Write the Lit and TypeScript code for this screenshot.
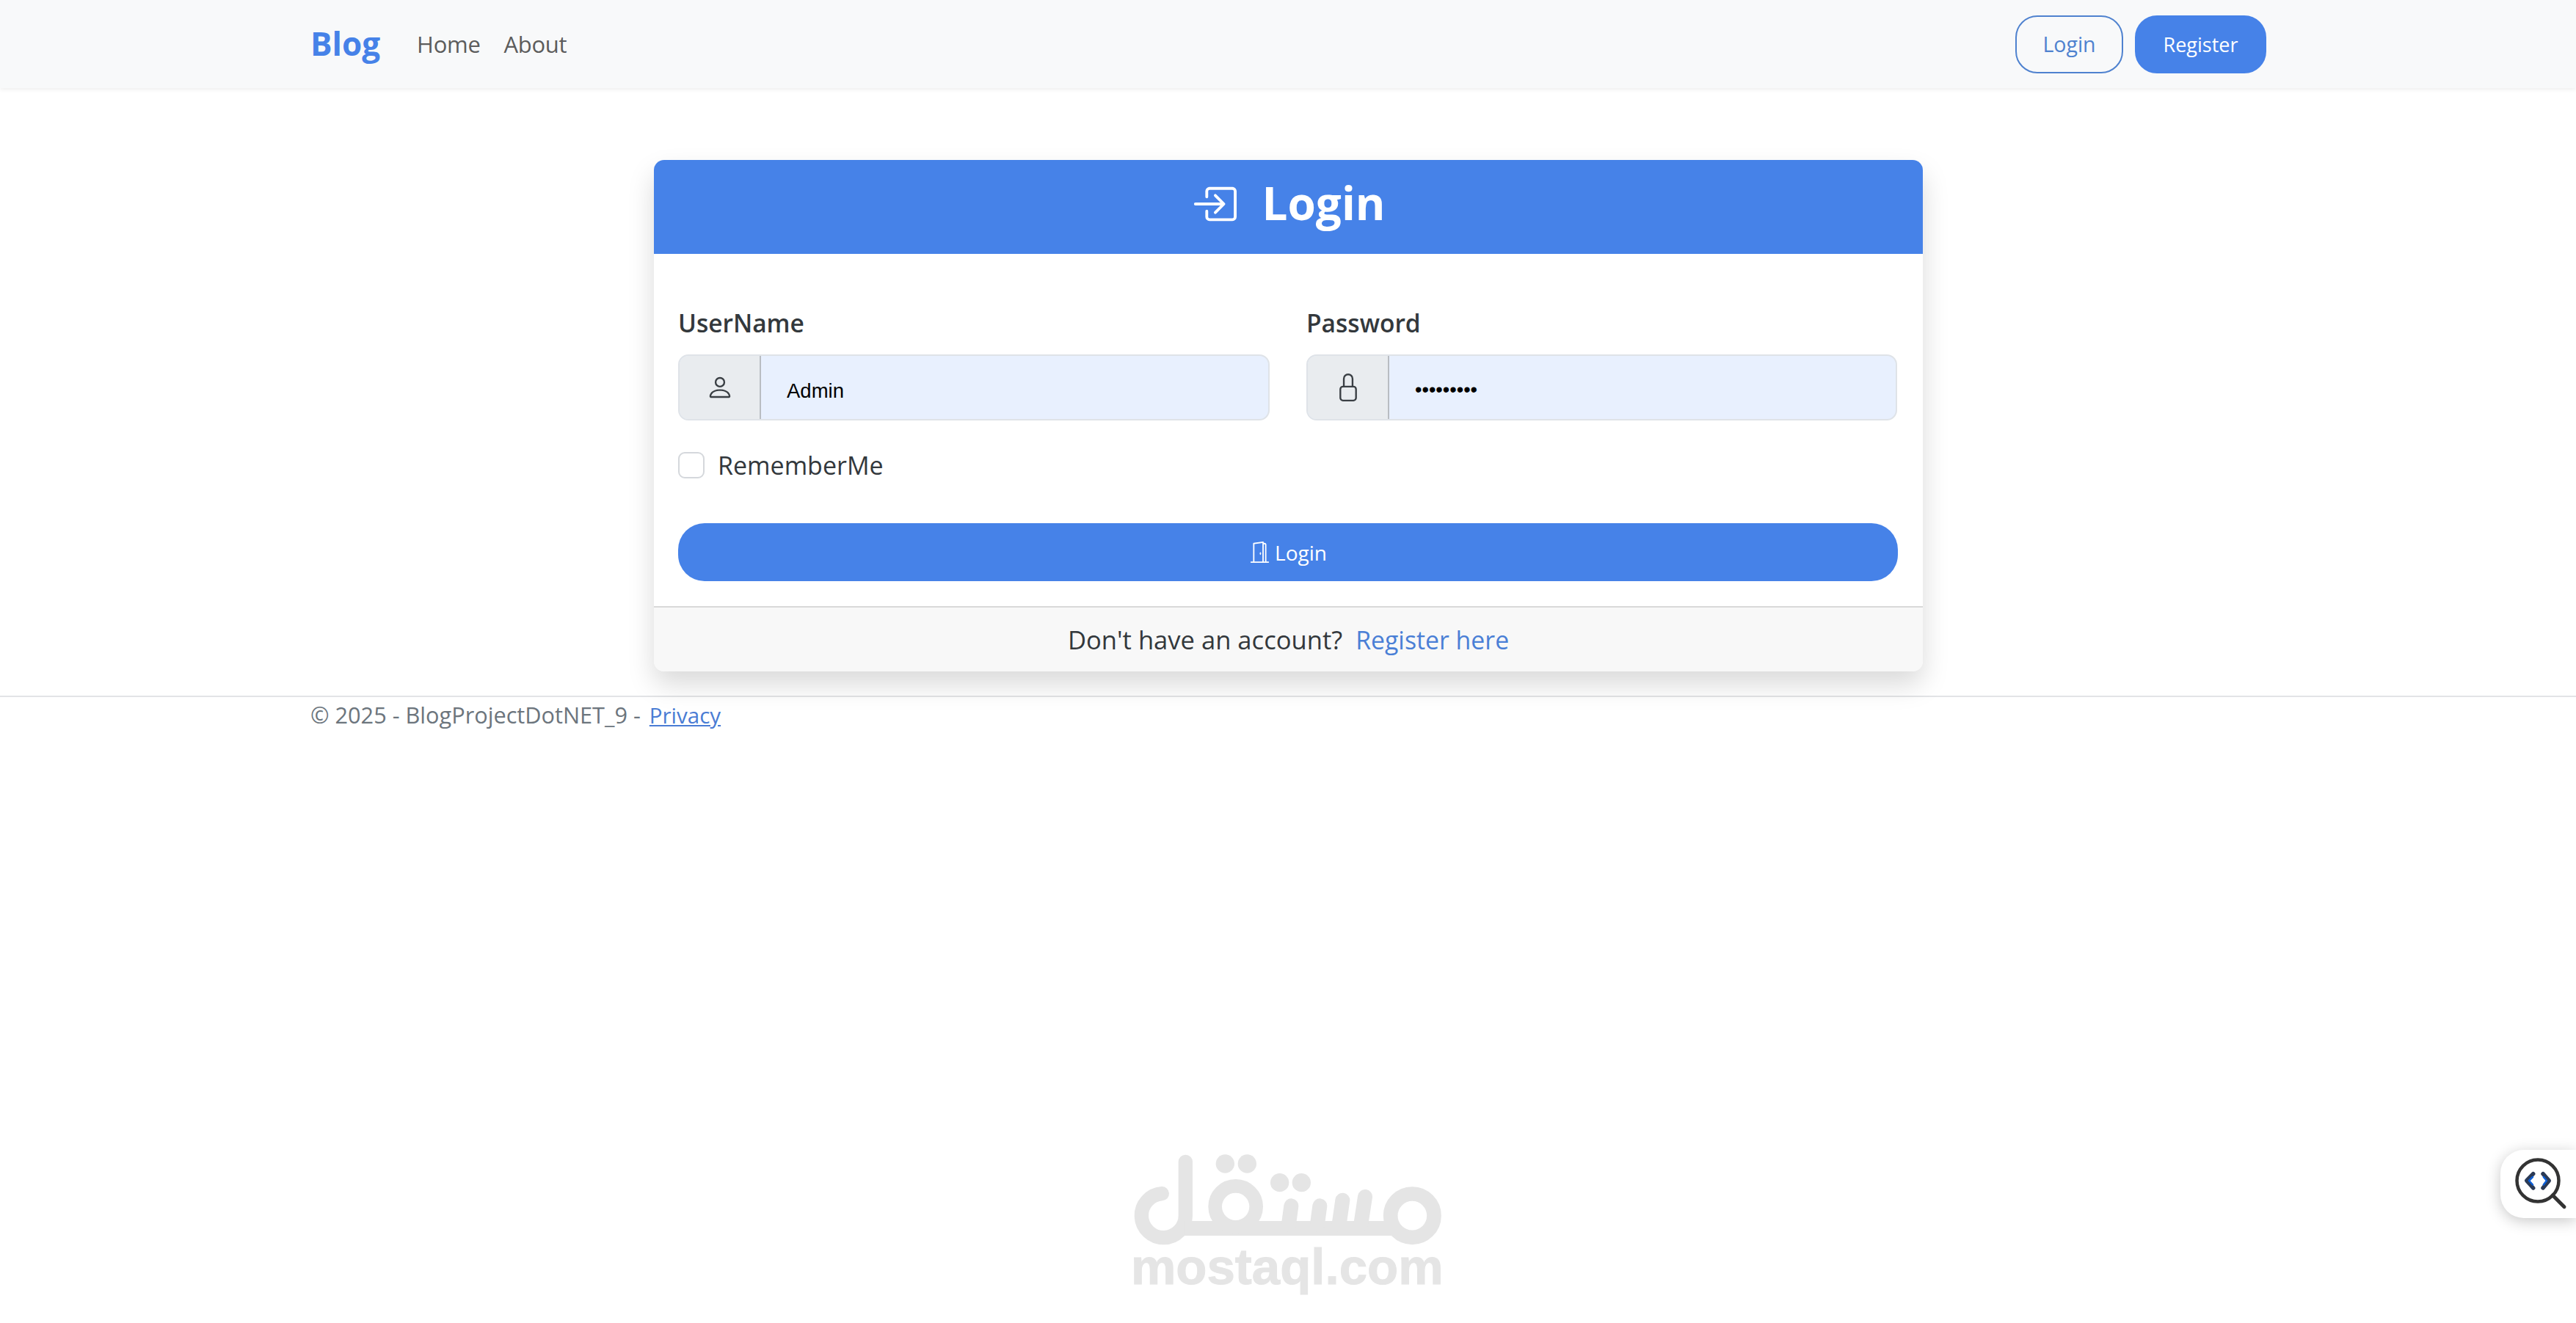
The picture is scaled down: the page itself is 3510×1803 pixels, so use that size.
import { LitElement, html, css } from "lit";
import { customElement } from "lit/decorators.js";

@customElement("app-root")
export class AppRoot extends LitElement {
  static styles = css`
    :host {
      display: block;
      position: relative;
      min-height: 100vh;
      overflow: hidden;
      background: #fff;
      font-family: "Open Sans", "Noto Sans", sans-serif;
      color: #33383c;
    }
    * { box-sizing: border-box; }
    a { text-decoration: none; }
    .nav {
      height: 120px;
      background: #f8f9fa;
      box-shadow: 0 2px 6px rgba(0, 0, 0, 0.07);
      display: flex;
      align-items: center;
      justify-content: space-between;
      padding: 0 422px 0 423px;
    }
    .left { display: flex; align-items: center; }
    .brand { font-size: 44px; font-weight: 700; color: #4682e8; margin-right: 50px; margin-top: -2px; }
    .navlink { font-size: 31px; color: #5c5c5c; margin-right: 32px; letter-spacing: -0.3px; }
    .right { display: flex; gap: 16px; }
    .btn {
      height: 79px;
      border-radius: 30px;
      display: flex;
      align-items: center;
      justify-content: center;
      font-size: 27px;
      border: 2px solid #4f82cf;
      color: #4f82cf;
    }
    .btn.login { width: 147px; font-size: 28.5px; }
    .btn.register { width: 179px; background: #4682e8; border-color: #4682e8; color: #fff; }
    main { display: flex; justify-content: center; padding: 98px 0 33px 1px; }
    .card {
      width: 1729px;
      border-radius: 14px;
      background: #fff;
      box-shadow: 0 18px 36px rgba(0, 0, 0, 0.15);
    }
    .head {
      height: 128px;
      background: #4682e8;
      border-radius: 14px 14px 0 0;
      color: #fff;
      display: flex;
      align-items: center;
      justify-content: center;
      gap: 34px;
      font-size: 62px;
      font-weight: 700;
    }
    .head svg { width: 62px; height: 62px; margin-top: -8px; }
    .head span { margin-top: -12px; }
    .body { padding: 0 34px 0 33px; }
    .grid { display: grid; grid-template-columns: 806px 805px; gap: 50px; padding-top: 70px; }
    label.field { display: block; font-size: 33.5px; font-weight: 600; line-height: 48px; margin-bottom: 19px; }
    .group {
      display: flex;
      height: 90px;
      border: 2px solid #dfe3e8;
      border-radius: 14px;
      background: #e8f0fe;
      overflow: hidden;
    }
    .addon {
      width: 111px;
      flex: none;
      background: #e9ecef;
      border-right: 2px solid #b9bdc2;
      display: flex;
      align-items: center;
      justify-content: center;
      color: #3a3f44;
    }
    .addon svg { width: 38px; height: 38px; }
    input.text {
      flex: 1;
      min-width: 0;
      border: 0;
      outline: 0;
      background: transparent;
      font-family: "Liberation Sans", Arial, sans-serif;
      font-size: 27.5px;
      color: #000;
      padding: 9px 0 0 35px;
    }
    input.pass { font-size: 27px; padding-top: 6px; }
    .check { display: flex; align-items: center; gap: 18px; margin-top: 43px; height: 36px; font-size: 34px; }
    .check input {
      appearance: none;
      width: 36px;
      height: 36px;
      margin: 0;
      border: 2px solid #d5d8dc;
      border-radius: 9px;
      background: #fff;
    }
    .submit {
      margin-top: 61px;
      height: 79px;
      border-radius: 36px;
      background: #4682e8;
      color: #fff;
      display: flex;
      align-items: center;
      justify-content: center;
      gap: 6px;
      font-size: 28px;
      margin-bottom: 34px;
    }
    .submit svg { width: 29px; height: 29px; }
    .foot {
      height: 89px;
      border-top: 2px solid #d9d9d9;
      background: #f8f8f8;
      border-radius: 0 0 14px 14px;
      display: flex;
      align-items: center;
      justify-content: center;
      gap: 18px;
      font-size: 34.6px;
    }
    .foot a { color: #4a7fd6; font-size: 33.8px; }
    footer {
      border-top: 2px solid #e3e4e6;
      padding: 2px 0 0 423px;
      font-size: 30.7px;
      color: #6c757d;
      line-height: 44px;
    }
    footer a { color: #4a7cd4; text-decoration: underline; font-size: 29.5px; margin-left: 4px; }
    .watermark {
      position: absolute;
      left: 1500px;
      top: 1540px;
      width: 500px;
      height: 263px;
    }
    .watermark svg { display: block; width: 500px; height: 263px; }
    .watermark div {
      position: absolute;
      left: 41px;
      top: 148px;
      font-family: "Liberation Sans", Arial, sans-serif;
      font-weight: 700;
      font-size: 69px;
      line-height: 78px;
      color: #e5e5e5;
      -webkit-text-stroke: 1px #e5e5e5;
      white-space: nowrap;
    }
    .widget {
      position: absolute;
      right: 0;
      top: 1567px;
      width: 103px;
      height: 93px;
      background: #fff;
      border-radius: 32px 0 0 32px;
      box-shadow: 0 4px 20px rgba(0, 0, 0, 0.22);
    }
    .widget svg { display: block; width: 103px; height: 93px; }
  `;

  render() {
    return html`
      <nav class="nav">
        <div class="left">
          <a class="brand">Blog</a>
          <a class="navlink">Home</a>
          <a class="navlink">About</a>
        </div>
        <div class="right">
          <a class="btn login">Login</a>
          <a class="btn register">Register</a>
        </div>
      </nav>
      <main>
        <section class="card">
          <div class="head">
            <svg viewBox="0 0 16 16" fill="currentColor">
              <path fill-rule="evenodd" d="M6 3.5a.5.5 0 0 1 .5-.5h8a.5.5 0 0 1 .5.5v9a.5.5 0 0 1-.5.5h-8a.5.5 0 0 1-.5-.5v-2a.5.5 0 0 0-1 0v2A1.5 1.5 0 0 0 6.5 14h8a1.5 1.5 0 0 0 1.5-1.5v-9A1.5 1.5 0 0 0 14.5 2h-8A1.5 1.5 0 0 0 5 3.5v2a.5.5 0 0 0 1 0z"/>
              <path fill-rule="evenodd" d="M11.854 8.354a.5.5 0 0 0 0-.708l-3-3a.5.5 0 1 0-.708.708L10.293 7.5H1.5a.5.5 0 0 0 0 1h8.793l-2.147 2.146a.5.5 0 0 0 .708.708z"/>
            </svg>
            <span>Login</span>
          </div>
          <div class="body">
            <div class="grid">
              <div>
                <label class="field">UserName</label>
                <div class="group">
                  <span class="addon">
                    <svg viewBox="0 0 16 16" fill="currentColor"><path d="M8 8a3 3 0 1 0 0-6 3 3 0 0 0 0 6m2-3a2 2 0 1 1-4 0 2 2 0 0 1 4 0m4 8c0 1-1 1-1 1H3s-1 0-1-1 1-4 6-4 6 3 6 4m-1-.004c-.001-.246-.154-.986-.832-1.664C11.516 10.68 10.289 10 8 10s-3.516.68-4.168 1.332c-.678.678-.83 1.418-.832 1.664z"/></svg>
                  </span>
                  <input class="text" type="text" value="Admin" />
                </div>
              </div>
              <div>
                <label class="field">Password</label>
                <div class="group">
                  <span class="addon">
                    <svg viewBox="0 0 16 16" fill="currentColor"><path d="M8 1a2 2 0 0 1 2 2v4H6V3a2 2 0 0 1 2-2m3 6V3a3 3 0 0 0-6 0v4a2 2 0 0 0-2 2v5a2 2 0 0 0 2 2h6a2 2 0 0 0 2-2V9a2 2 0 0 0-2-2M5 8h6a1 1 0 0 1 1 1v5a1 1 0 0 1-1 1H5a1 1 0 0 1-1-1V9a1 1 0 0 1 1-1"/></svg>
                  </span>
                  <input class="text pass" type="password" value="123456789" />
                </div>
              </div>
            </div>
            <label class="check"><input type="checkbox" /><span>RememberMe</span></label>
            <div class="submit">
              <svg viewBox="0 0 16 16" fill="currentColor">
                <path d="M8.5 10c-.276 0-.5-.448-.5-1s.224-1 .5-1 .5.448.5 1-.224 1-.5 1"/>
                <path d="M10.828.122A.5.5 0 0 1 11 .5V1h.5A1.5 1.5 0 0 1 13 2.5V15h1.5a.5.5 0 0 1 0 1h-13a.5.5 0 0 1 0-1H3V1.5a.5.5 0 0 1 .43-.495l7-1a.5.5 0 0 1 .398.117M11.5 2H11v13h1V2.5a.5.5 0 0 0-.5-.5M4 1.934V15h6V1.077z"/>
              </svg>
              <span>Login</span>
            </div>
          </div>
          <div class="foot">
            <span>Don't have an account?</span>
            <a>Register here</a>
          </div>
        </section>
      </main>
      <footer>© 2025 - BlogProjectDotNET_9 - <a>Privacy</a></footer>
      <div class="watermark">
        <svg viewBox="0 0 1500 789" fill="none" stroke="#e5e5e5" stroke-linecap="round">
          <circle cx="1273" cy="350" r="89" stroke-width="59"/>
          <path d="M250 260A90 90 0 1 0 346 350V130" stroke-width="58"/>
          <path d="M340 402H1190" stroke-width="60" stroke-linecap="butt"/>
          <circle cx="551" cy="313" r="84" stroke-width="56"/>
          <path d="M768 385L778 310M885 385L895 310M974 385L988 287M1063 385L1080 273" stroke-width="60"/>
          <g fill="#e5e5e5" stroke="none">
            <circle cx="508" cy="138" r="38"/><circle cx="598" cy="138" r="38"/>
            <circle cx="731" cy="215" r="38"/><circle cx="820" cy="215" r="38"/>
          </g>
        </svg>
        <div>mostaql.com</div>
      </div>
      <div class="widget">
        <svg viewBox="0 0 103 93" fill="none" stroke-linecap="round" stroke-linejoin="round">
          <circle cx="51" cy="42" r="28.5" stroke="#333" stroke-width="4.5"/>
          <path d="M71.3 62L87 77.7" stroke="#333" stroke-width="5"/>
          <path d="M44.7 32.7L35.7 42L44.7 52M58 32.7L66.3 42L58 52" stroke="#2b3a55" stroke-width="5.5"/>
          <path d="M44 37L39 42L44 47.5M58.8 37L63 42L58.8 47.5" stroke="#0b5ed7" stroke-width="2.5"/>
        </svg>
      </div>
    `;
  }
}
